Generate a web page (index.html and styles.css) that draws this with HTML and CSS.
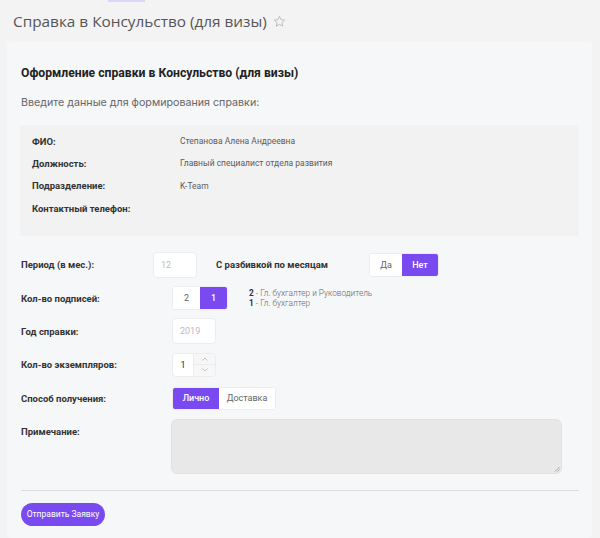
FILE: index.html
```html
<!DOCTYPE html>
<html lang="ru">
<head>
<meta charset="utf-8">
<link rel="stylesheet" href="styles.css">
</head>
<body>
<div class="tabmark"></div>
<div class="pagehead">
  <h1 class="title">Справка в Консульство (для визы)</h1>
  <svg class="star" width="13" height="13" viewBox="0 0 24 24"><path d="M12 2.5l2.9 6.1 6.6.8-4.9 4.6 1.3 6.6L12 17.3l-5.9 3.3 1.3-6.6-4.9-4.6 6.6-.8z" fill="none" stroke="#b9b9b9" stroke-width="1.7" stroke-linejoin="round"/></svg>
</div>
<div class="card">
  <h2 class="heading">Оформление справки в Консульство (для визы)</h2>
  <p class="intro">Введите данные для формирования справки:</p>
  <div class="info">
    <div class="info-row"><span class="info-label">ФИО:</span><span class="info-value">Степанова Алена Андреевна</span></div>
    <div class="info-row"><span class="info-label">Должность:</span><span class="info-value">Главный специалист отдела развития</span></div>
    <div class="info-row"><span class="info-label">Подразделение:</span><span class="info-value">K-Team</span></div>
    <div class="info-row"><span class="info-label">Контактный телефон:</span><span class="info-value"></span></div>
  </div>
  <div class="form">
    <div class="row">
      <span class="label label-short">Период (в мес.):</span>
      <div class="input small">12</div>
      <span class="label sublabel">С разбивкой по месяцам</span>
      <div class="toggle">
        <span class="opt opt-da">Да</span><span class="opt active opt-net">Нет</span>
      </div>
    </div>
    <div class="row">
      <span class="label">Кол-во подписей:</span>
      <div class="toggle tall">
        <span class="opt opt-num">2</span><span class="opt active opt-num">1</span>
      </div>
      <div class="legend">
        <div><b>2</b> - Гл. бухгалтер и Руководитель</div>
        <div><b>1</b> - Гл. бухгалтер</div>
      </div>
    </div>
    <div class="row">
      <span class="label">Год справки:</span>
      <div class="input small">2019</div>
    </div>
    <div class="row">
      <span class="label">Кол-во экземпляров:</span>
      <div class="stepper">
        <span class="step-val">1</span>
        <span class="step-btns">
          <span class="step-btn"><svg width="6" height="4" viewBox="0 0 6 4"><path d="M0.5 3.5L3 1l2.5 2.5" fill="none" stroke="#b5b5b5" stroke-width="0.8"/></svg></span>
          <span class="step-btn"><svg width="6" height="4" viewBox="0 0 6 4"><path d="M0.5 0.5L3 3l2.5-2.5" fill="none" stroke="#b5b5b5" stroke-width="0.8"/></svg></span>
        </span>
      </div>
    </div>
    <div class="row">
      <span class="label">Способ получения:</span>
      <div class="toggle short">
        <span class="opt active opt-lich">Лично</span><span class="opt opt-dost">Доставка</span>
      </div>
    </div>
    <div class="row row-top">
      <span class="label">Примечание:</span>
      <div class="textarea">
        <svg class="grip" width="6" height="6" viewBox="0 0 6 6"><path d="M5.5 1L1 5.5M5.5 3.5L3.5 5.5" stroke="#9a9a9a" stroke-width="0.8"/></svg>
      </div>
    </div>
  </div>
  <div class="divider"></div>
  <button class="submit">Отправить Заявку</button>
</div>
</body>
</html>
```

FILE: styles.css
```css
html, body {
  margin: 0;
  padding: 0;
}
body {
  background: #f3f3f3;
  font-family: Roboto, "Noto Sans", sans-serif;
  width: 600px;
  height: 538px;
  overflow: hidden;
}
.tabmark {
  margin-left: 108px;
  width: 37px;
  height: 2px;
  background: #ddd4fb;
}
.pagehead {
  display: flex;
  align-items: center;
  gap: 6px;
  height: 37px;
  padding-left: 13px;
}
.title {
  margin: 0;
  font-family: "Open Sans", sans-serif;
  font-weight: 400;
  font-size: 15.35px;
  color: #555;
}
.star {
  display: block;
  margin-top: 1px;
}
.card {
  box-sizing: border-box;
  margin: 3px 8px 0 7px;
  background: #f6f7f9;
  border-radius: 4px;
  padding: 24px 13px 0 14px;
  height: 496px;
}
.heading {
  margin: 0;
  font-size: 12.2px;
  font-weight: 700;
  color: #222;
  line-height: 15px;
}
.intro {
  margin: 15px 0 0;
  font-family: Inter, sans-serif;
  font-size: 10.7px;
  color: #666;
  line-height: 14px;
}
.info {
  margin: 15px 0 0 -1px;
  background: #f2f2f2;
  padding: 5px 12px 17px;
}
.info-row {
  display: flex;
  align-items: center;
  height: 22.3px;
}
.info-label {
  width: 148px;
  font-size: 9.5px;
  font-weight: 700;
  color: #333;
}
.info-value {
  font-size: 8.5px;
  color: #5c5c5c;
}
.form {
  margin-top: 12px;
}
.row {
  display: flex;
  align-items: center;
  height: 33.3px;
}
.row-top {
  align-items: flex-start;
  height: auto;
  margin-top: 4px;
}
.row-top .label {
  margin-top: 7px;
}
.label {
  width: 151px;
  flex: none;
  font-size: 9.5px;
  font-weight: 700;
  color: #333;
}
.label-short {
  width: 132px;
}
.sublabel {
  width: 153px;
  margin-left: 19px;
}
.input {
  box-sizing: border-box;
  height: 26px;
  width: 44px;
  background: #fff;
  border: 1px solid #ececec;
  border-radius: 4px;
  font-size: 9px;
  color: #bbb;
  display: flex;
  align-items: center;
  padding-left: 7px;
}
.toggle {
  display: flex;
  height: 24px;
  border-radius: 3px;
  overflow: hidden;
  border: 1px solid #ececec;
  box-sizing: border-box;
  background: #fff;
}
.toggle.short {
  height: 23px;
}
.opt {
  display: flex;
  align-items: center;
  justify-content: center;
  font-size: 9px;
  color: #666;
  background: #fff;
}
.opt.active {
  background: #7a4af1;
  color: #fff;
  font-weight: 500;
}
.opt-da { width: 32px; }
.opt-net { width: 36px; }
.opt-num { width: 27px; }
.opt-lich { width: 46px; }
.opt-dost { width: 56px; }
.legend {
  margin-left: 21px;
  font-size: 8.3px;
  font-weight: 300;
  color: #666;
  line-height: 10px;
}
.legend b {
  color: #333;
  font-weight: 700;
}
.stepper {
  display: flex;
  box-sizing: border-box;
  width: 44px;
  height: 24px;
  background: #fff;
  border: 1px solid #ececec;
  border-radius: 4px;
  overflow: hidden;
}
.step-val {
  width: 20px;
  display: flex;
  align-items: center;
  justify-content: center;
  font-size: 9px;
  color: #333;
  border-right: 1px solid #ececec;
}
.step-btns {
  flex: 1;
  display: flex;
  flex-direction: column;
  background: #f7f7f8;
}
.step-btn {
  flex: 1;
  display: flex;
  align-items: center;
  justify-content: center;
}
.step-btn + .step-btn {
  border-top: 1px solid #ececec;
}
.textarea {
  position: relative;
  box-sizing: border-box;
  width: 391px;
  height: 55px;
  margin-left: -1px;
  background: #e8e8e8;
  border: 1px solid #e2e2e2;
  border-radius: 6px;
}
.grip {
  position: absolute;
  right: 1px;
  bottom: 1px;
}
.divider {
  margin-top: 16px;
  height: 1px;
  background: #dcdde0;
}
.submit {
  display: block;
  margin-top: 12px;
  height: 23px;
  width: 84px;
  border: none;
  border-radius: 12px;
  background: #7a4af1;
  color: #fff;
  font-family: Roboto, sans-serif;
  font-size: 8.5px;
  padding: 0;
}
```
